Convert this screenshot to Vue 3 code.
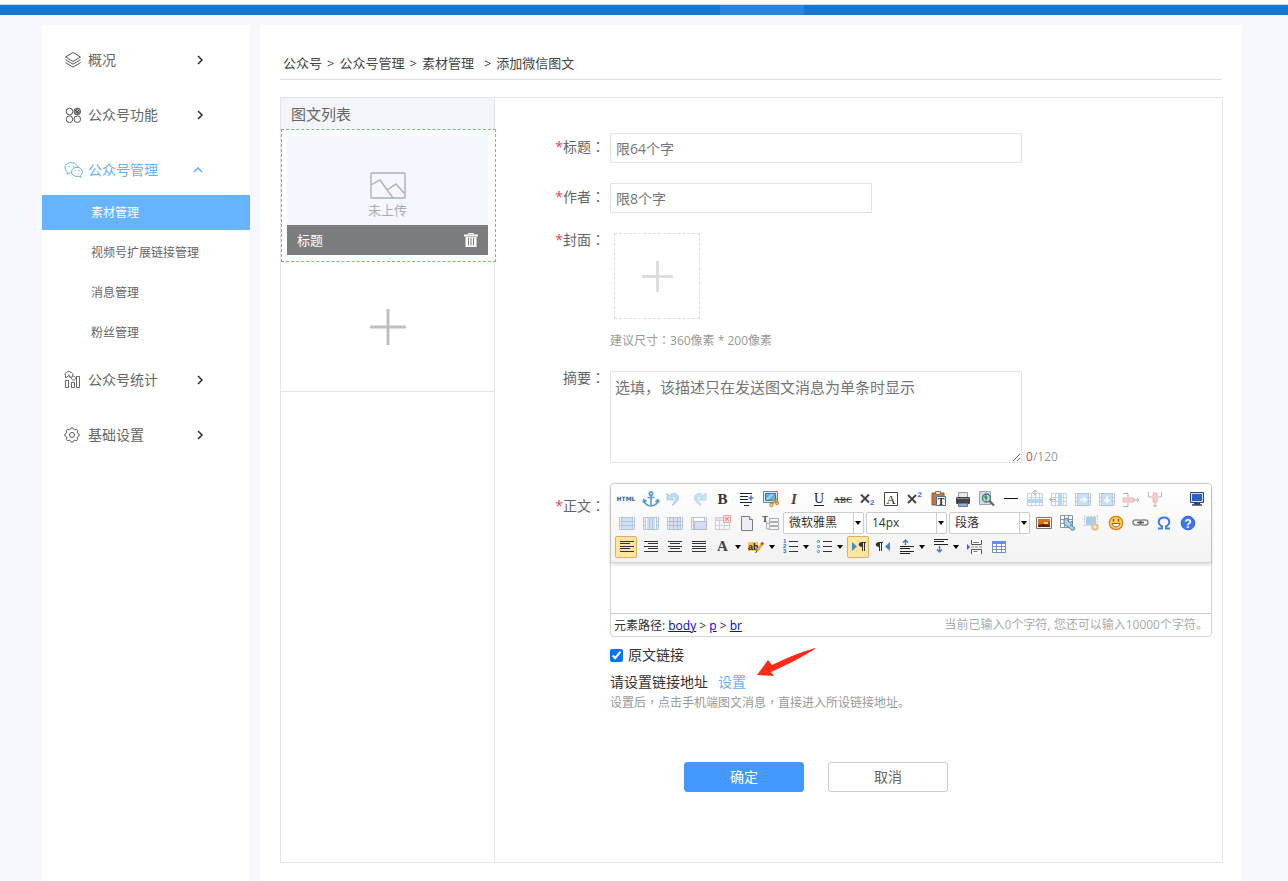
<script setup>
import { ref, computed } from 'vue'

const menuTop = [
  { label: '概况', icon: 'layers' },
  { label: '公众号功能', icon: 'circles' },
  { label: '公众号管理', icon: 'wechat', open: true, children: ['素材管理', '视频号扩展链接管理', '消息管理', '粉丝管理'] },
  { label: '公众号统计', icon: 'stats' },
  { label: '基础设置', icon: 'gear' },
]

// Eight-toothed cog outline around (8, 9)
const cog = Array.from({ length: 32 }, (_, i) => {
  const r = i % 4 < 2 ? 7.3 : 5.9
  const a = ((i - 0.5) / 32) * Math.PI * 2
  return `${(8 + r * Math.cos(a)).toFixed(2)} ${(9 + r * Math.sin(a)).toFixed(2)}`
}).join('L')

const menuIcons = {
  layers: '<path d="M9 1.500 16.500 6 9 10.500 1.500 6z"/><path d="M1.500 8.700 9 13.200l7.500-4.500M1.500 11.600 9 16.100l7.500-4.500"/>',
  circles: '<circle cx="5.500" cy="5.500" r="3.300"/><circle cx="13.300" cy="5.500" r="3.300" fill="#aaa"/><circle cx="5.500" cy="13.200" r="3.300"/><circle cx="13.300" cy="13.200" r="3.300"/><path d="M10.800 5.500l2.500-2.500M11.500 7.500l4-4M13 8.300l3-3M11 4l4 4"/>',
  wechat: '<path d="M7.800 12.200c-.9 0-1.800-.1-2.500-.4L2.800 13.300l.6-2.500C1.900 9.800 1 8.400 1 6.900 1 3.900 3.900 1.500 7.400 1.500c3.200 0 5.900 2 6.300 4.600"/><path d="M13 6.300c3.100 0 5.500 2 5.500 4.600 0 1.400-.7 2.600-1.900 3.500l.5 2-2.200-1.200c-.6.200-1.200.3-1.900.3-3.100 0-5.500-2-5.500-4.600s2.400-4.600 5.500-4.600z"/><path d="M5 5.200v1M9.500 5.200v1M11 9.200v1M15 9.200v1" stroke-width="1.400"/>',
  stats: '<g stroke-width=".9"><path d="M1.500 9.500h3v7h-3zM7.500 11.500h3v5h-3zM12.500 5.500h3v11h-3z"/><path d="M1.500 7V4.500a2 2 0 0 1 1-3 3 3 0 0 1 4.500 0 2 2 0 0 1 1.500 3M2 6.500l2.500-1.500 2 1.500 2.500-1M4.500 3.500l3 4a2.200 2.200 0 0 0 3 1.500 2 2 0 0 0 0-3.500l-2-1"/></g>',
  gear: `<circle cx="8" cy="9" r="2.500"/><path stroke-linejoin="round" d="M${cog}z"/>`,
}

const grid = (c) => `<path d="M3 4.500h16M3 8.500h16M3 12.500h16M3 16.500h16M3.500 4v13M7.500 4v13M11.500 4v13M15.500 4v13M18.500 4v13" stroke="${c}" fill="none"/>`
const film = (fill, inner = '') => `<path d="M3.500 4.500h15v12h-15z" fill="#fff" stroke="#7d9cc4"/><path d="M6 5h10v11H6z" fill="${fill}"/><path d="M5.500 5v11M16.500 5v11M3.500 8.500h2M3.500 12.500h2M16.500 8.500h2M16.500 12.500h2" stroke="#7d9cc4"/>${inner}`
const lines = (rows) => rows.map(([y, a, b]) => `<path d="M${a} ${y}.500H${b}" stroke="#333"/>`).join('')

const icons = {
  html: '<text x="10" y="12" text-anchor="middle" font-family="DejaVu Sans,sans-serif" font-size="6" font-weight="700" fill="#33659c">HTML</text>',
  anchor: '<g fill="none" stroke="#5a9bd5" stroke-width="1.700"><circle cx="11" cy="4.500" r="1.700"/><path d="M11 6v11M7.500 8.500h7"/><path d="M4 11c.3 3.500 3 5.500 7 6 4-.5 6.700-2.500 7-6M2.800 13.300 4 10.700l2.500 1.800M15.500 12.500l2.500-1.800 1.200 2.600"/></g>',
  undo: '<path d="M3 4v7h7L7.700 8.600C11 6.500 13 9 10 13l-2 3.500C14 13 16 9 13.500 6 11 3.500 7.500 4 5.500 6.400z" fill="#8fc0e8" stroke="#5fa0d8" stroke-width=".8"/>',
  redo: '<path d="M18 4v7h-7l2.300-2.400C10 6.500 8 9 11 13l2 3.500C7 13 5 9 7.500 6 10 3.500 13.500 4 15.500 6.400z" fill="#9ccaee" stroke="#74b0e0" stroke-width=".8"/>',
  bold: '<text x="10.500" y="15" text-anchor="middle" font-family="Liberation Serif,serif" font-size="15" font-weight="700" fill="#333">B</text>',
  indent: '<path d="M4 4.500h12M4 7.500h8M4 10.500h8M4 13.500h12M8 16.500h5" stroke="#222" stroke-width="1.200"/><path d="M12.500 9h5M15 6.500v5" stroke="#4c7de0" stroke-width="1.600"/>',
  snap: '<path d="M3.500 2.500h14v11h-14z" fill="#daeefa" stroke="#4c8db8"/><path d="M5.500 4.500h10v7h-10z" fill="#5eb0dd" stroke="#347ba8"/><path d="M6 10l5-5h3l-6 6z" fill="#9bd6ef"/><g fill="none" stroke="#c9942f" stroke-width="1.300"><path d="M11 10l6 4M17.500 9l-5 6"/><circle cx="11.500" cy="16" r="1.500"/><circle cx="17" cy="14" r="1.500"/></g>',
  italic: '<text x="10" y="15" text-anchor="middle" font-family="Liberation Serif,serif" font-size="15" font-style="italic" font-weight="700" fill="#444">I</text>',
  underline: '<text x="11" y="14" text-anchor="middle" font-family="Liberation Serif,serif" font-size="14" fill="#222">U</text><path d="M6 16.500h10" stroke="#222"/>',
  strike: '<text x="11" y="14" text-anchor="middle" font-family="Liberation Serif,serif" font-size="9" font-weight="700" fill="#555">ABC</text><path d="M2.500 10.500h17" stroke="#333"/>',
  sub: '<path d="M5 5.500l8 8M13 5.500l-8 8" stroke="#444" stroke-width="1.900"/><text x="14" y="16" font-family="Liberation Sans,sans-serif" font-size="8" font-weight="700" fill="#3c71d0">2</text>',
  box: '<path d="M4.500 3.500h13v13h-13z" fill="#fff" stroke="#444"/><text x="11" y="14.500" text-anchor="middle" font-family="Liberation Serif,serif" font-size="13" fill="#222">A</text>',
  sup: '<path d="M4 6l8 8M12 6l-8 8" stroke="#444" stroke-width="1.900"/><text x="13.500" y="8" font-family="Liberation Sans,sans-serif" font-size="8" font-weight="700" fill="#3c71d0">2</text>',
  paste: '<path d="M4 4h12v12H4z" fill="#c77736" stroke="#9c5627"/><path d="M7.500 2.500h5v3h-5z" fill="#ddd" stroke="#777"/><path d="M8.500 7.500h9v9h-9z" fill="#fff" stroke="#4472a8"/><text x="13" y="15.500" text-anchor="middle" font-family="Liberation Serif,serif" font-size="10" font-weight="700" fill="#222">T</text>',
  print: '<path d="M6.500 3.500h9v6h-9z" fill="#e9ebee" stroke="#999"/><rect x="4" y="8" width="14" height="7" rx="1" fill="#444"/><path d="M4.500 9.500h13" stroke="#888"/><path d="M6.500 14.500h9v3h-9z" fill="#cfe0fb" stroke="#777"/><path d="M7 16h8" stroke="#3c80e0"/>',
  preview: '<path d="M3.500 2.500h11v13h-11z" fill="#d4dbe3" stroke="#9aa5b1"/><circle cx="10.500" cy="9" r="4" fill="#b5dcf0" stroke="#536a7d" stroke-width="1.300"/><path d="M8 8c1-2.500 3-2.500 3.500 0l-1 4z" fill="#3b9659"/><path d="M13.500 12l4.500 4.500" stroke="#666" stroke-width="2.300"/>',
  hr: '<path d="M4 9.500h14" stroke="#111"/>',
  insertrow: grid('#9eb4d0') + '<path d="M3 10h16v4H3z" fill="#7ab6f0"/><path d="M11 1v6M8.500 3.500 11 1l2.500 2.500" fill="none" stroke="#777"/>',
  insertcol: grid('#9eb4d0') + '<path d="M10 4h4v13h-4z" fill="#7ab6f0"/><path d="M1 10.500h7M4 8 1.500 10.500 4 13" fill="none" stroke="#777"/>',
  mergeright: film('#9cc8f2', '<path d="M8 10.500h6M11.500 8l3 2.500-3 2.500" fill="none" stroke="#fff" stroke-width="1.500"/>'),
  mergedown: film('#9cc8f2', '<path d="M11 7v6M8.500 10.500l2.500 3 2.500-3" fill="none" stroke="#fff" stroke-width="1.500"/>'),
  splitrow: '<path d="M3 4.500h5v4M3 17.500h5v-4" fill="none" stroke="#777"/><path d="M3 9h11v4H3z" fill="#f3a8a8" stroke="#dd8585"/><path d="M14 11h5M17 9l2 2-2 2" fill="none" stroke="#777"/>',
  splitcol: '<path d="M4.500 3v5h4M17.500 3v5h-4" fill="none" stroke="#777"/><path d="M9 4h4v9H9z" fill="#f3a8a8" stroke="#dd8585"/><path d="M11 13v5M9 16l2 2 2-2" fill="none" stroke="#777"/>',
  screen: '<path d="M4.500 3.500h13v10h-13z" fill="#dbe5f5" stroke="#2e4775"/><path d="M6 5h10v7H6z" fill="#2f5fc8"/><path d="M8 14.500h6M6 16h10" stroke="#2e4775" stroke-width="1.300"/>',
  tabrows: film('#a9cdf0', '<path d="M6 8.500h10M6 12.500h10" stroke="#7d9cc4"/>'),
  tabcols: film('#fff', '<path d="M7 5h2v11H7zM10 5h2v11h-2zM13 5h2v11h-2z" fill="#a9cdf0"/><path d="M9.500 5v11M12.500 5v11" stroke="#7d9cc4"/>'),
  tabcells: film('#c3cdee', '<path d="M6 8.500h10M6 12.500h10M9.500 5v11M13.500 5v11" stroke="#7d88b8"/>'),
  tabmerge: film('#fff', '<path d="M6.500 8.500h12v8h-12z" fill="#b9c5ee" stroke="#7d88b8"/>'),
  deltable: '<path d="M3 4h15v3H3z" fill="#eec9b8"/><path d="M3.500 4.500h14v12h-14zM3.500 7.500h14M3.500 12.500h14M7.500 7v9M12.500 7v9" fill="none" stroke="#a8aec0"/><path d="M11.500 2.500h7v7h-7z" fill="#fbe0df" stroke="#e16060"/><path d="M13 4l4 4M17 4l-4 4" stroke="#e13333" stroke-width="1.300"/>',
  doc: '<path d="M5.500 3.500h8l3 3v11h-11z" fill="#eceef4" stroke="#777d87"/><path d="M13.500 3.500v3h3" fill="#fff" stroke="#777d87"/>',
  template: '<text x="2" y="9" font-family="Liberation Serif,serif" font-size="9" font-weight="700" fill="#444">T</text><path d="M6.500 9v7h3M6.500 10.500h3M9.500 5.500h9v3h-9zM9.500 9.500h9v3h-9zM9.500 13.500h9v3h-9z" fill="none" stroke="#a3aebb"/>',
  image: '<path d="M3.500 4.500h15v11h-15z" fill="#fff" stroke="#777"/><path d="M5 6h12v8H5z" fill="#b64b12"/><path d="M5 6h12v2l-8 4H5z" fill="#db7020"/><path d="M11 9h4v2h-4z" fill="#ffdc62"/><path d="M5 12l5-1 7 1v2H5z" fill="#5f2010"/>',
  tabtool: '<path d="M3.500 2.500h12v12h-12z" fill="#fff"/><path d="M3.500 2.500h12v12h-12zM3.500 6.500h12M3.500 10.500h12M7.500 2.500v12M11.500 2.500v12" fill="none" stroke="#8a96a8"/><path d="M7 9a3 3 0 0 1 4-3.500V8l2 1.500L15 8c1.500 3-1 5-2 4l5 3-1 2-2 0-5-4c-2 0-3-1.500-3-4z" fill="#a9d4ed" stroke="#54819e"/>',
  imgtool: '<path d="M5 4h10v8H5z" fill="#6fa8e0"/><path d="M3.500 2v12M16.500 2v9M3 3.500h14M3 12.500h8" stroke="#a5b6c8" stroke-dasharray="2 1"/><circle cx="14" cy="14" r="2.700" fill="#f9e8be" stroke="#cf9a40" stroke-width="2.200"/>',
  smile: '<circle cx="11" cy="10" r="6.700" fill="#ffd455" stroke="#df7a20" stroke-width="1.300"/><path d="M8.500 6v2.500M13.500 6v2.500" stroke="#9d4e11" stroke-width="1.500"/><path d="M7 10.500h8c-.5 4.500-7.500 4.500-8 0z" fill="#fff" stroke="#b35b16"/>',
  link: '<g fill="none" stroke="#888" stroke-width="1.400"><rect x="4" y="7" width="8" height="5" rx="2.500"/><rect x="11" y="7" width="8" height="5" rx="2.500"/><path d="M8 9.500h7" stroke="#555"/></g>',
  omega: '<path d="M5 15.500h4v-2C3.500 10.500 5.500 4.500 11 4.500s7.500 6 2 9v2h4" fill="none" stroke="#3e7be2" stroke-width="2"/>',
  help: '<circle cx="11" cy="10" r="6.800" fill="#3c78ea" stroke="#2b5fc9"/><text x="11" y="14.500" text-anchor="middle" font-family="Liberation Sans,sans-serif" font-size="12" font-weight="700" fill="#fff">?</text>',
  left: lines([[4, 4, 18], [6, 4, 14], [9, 4, 18], [11, 4, 14], [14, 4, 18]]),
  right: lines([[4, 4, 18], [6, 8, 18], [9, 4, 18], [11, 8, 18], [14, 4, 18]]),
  center: lines([[4, 4, 18], [6, 6, 16], [9, 4, 18], [11, 6, 16], [14, 4, 18]]),
  justify: lines([[4, 4, 18], [6, 4, 18], [9, 4, 18], [11, 4, 18], [14, 4, 18]]),
  color: '<text x="10.500" y="14" text-anchor="middle" font-family="Liberation Serif,serif" font-size="15" font-weight="700" fill="#444">A</text>',
  mark: '<path d="M2 5h10v9H2z" fill="#ffc161"/><text x="2" y="12.500" font-family="Liberation Sans,sans-serif" font-size="9" font-weight="700" fill="#222">ab</text><path d="M11 14l5-7" stroke="#e9a43c" stroke-width="2.500"/><path d="M15.500 7.500l1.500-2" stroke="#d33" stroke-width="2.500"/><path d="M9.500 16l1.500-2.500" stroke="#333"/>',
  ordered: '<g font-family="Liberation Sans,sans-serif" font-size="6" font-weight="700" fill="#2e68df"><text x="3" y="6">1</text><text x="3" y="11">2</text><text x="3" y="16">3</text></g><path d="M9 4.500h9M9 9.500h9M9 14.500h9" stroke="#333"/>',
  bullets: '<g fill="none" stroke="#4877d8"><circle cx="4.500" cy="4.500" r="1.100"/><circle cx="4.500" cy="9.500" r="1.100"/><circle cx="4.500" cy="14.500" r="1.100"/></g><path d="M9 4.500h9M9 9.500h9M9 14.500h9" stroke="#333"/>',
  ltr: '<path d="M4 5v9l5-4.500z" fill="#4583dc"/><path d="M13 5.500h5M14.500 5v9M16.500 5v9" stroke="#333"/><path d="M14.500 5c-5 0-5 5 0 5z" fill="#333"/>',
  rtl: '<path d="M18 5v9l-5-4.500z" fill="#4583dc"/><path d="M6 5.500h5M7.500 5v9M9.500 5v9" stroke="#333"/><path d="M7.500 5c-5 0-5 5 0 5z" fill="#333"/>',
  spacetop: '<path d="M9.500 8V3M7 5.500 9.500 3 12 5.500" fill="none" stroke="#4779cb" stroke-width="1.400"/><path d="M4 9.500h14M4 11.500h10M4 14.500h14M4 16.500h10" stroke="#222"/>',
  spacebottom: '<path d="M4 2.500h14M4 4.500h10M4 7.500h14" stroke="#222"/><path d="M9.500 9v6M7 12.500 9.500 15 12 12.500" fill="none" stroke="#4779cb" stroke-width="1.400"/>',
  pagebreak: '<path d="M7.500 3v4.500h10V3M7.500 17v-4.500h10V17" fill="#fff" stroke="#555"/><path d="M7 10h12" stroke="#888" stroke-dasharray="3 1"/><path d="M3 7v6l3-3z" fill="#3160bd"/><path d="M9 5.500h6M9.500 14.500h4" stroke="#777"/>',
  table: '<path d="M4.500 4.500h13v11h-13z" fill="#fff"/><path d="M4.500 4.500h13v11h-13zM4.500 9.500h13M4.500 12.500h13M8.500 7v9M13.500 7v9" fill="none" stroke="#7191c4"/><path d="M4 4h14v3H4z" fill="#5d92e8"/>',
}

const b = (icon, title, o = {}) => ({ icon, title, ...o })
const off = { disabled: true }
const row1 = [
  b('html', '源代码'), b('anchor', '锚点'), b('undo', '撤销', off), b('redo', '重做', off), b('bold', '加粗'),
  b('indent', '首行缩进'), b('snap', '截图'), b('italic', '斜体'), b('underline', '下划线'), b('strike', '删除线'),
  b('sub', '下标'), b('box', '字符边框'), b('sup', '上标'), b('paste', '纯文本粘贴'), b('print', '打印'),
  b('preview', '预览'), b('hr', '分隔线'), b('insertrow', '前插入行', off), b('insertcol', '前插入列', off),
  b('mergeright', '右合并单元格', off), b('mergedown', '下合并单元格', off), b('splitrow', '拆分成行', off), b('splitcol', '拆分成列', off),
]
const row2a = [
  b('tabrows', '拆分行', off), b('tabcols', '拆分列', off), b('tabcells', '完全拆分单元格', off), b('tabmerge', '合并多个单元格', off),
  b('deltable', '删除表格', off), b('doc', '清空文档'), b('template', '插入标题'),
]
const selects = [
  { label: '字体', options: ['微软雅黑', '宋体', '黑体'] },
  { label: '字号', options: ['14px', '16px', '18px'] },
  { label: '段落格式', options: ['段落', '标题 1', '标题 2'] },
]
const row2b = [
  b('image', '图片'), b('tabtool', '表格属性'), b('imgtool', '图片属性', off), b('smile', '表情'),
  b('link', '超链接'), b('omega', '特殊字符'), b('help', '帮助'),
]
const row3 = [
  b('left', '居左对齐', { active: true }), b('right', '居右对齐'), b('center', '居中对齐'), b('justify', '两端对齐'),
  b('color', '字体颜色', { menu: true }), b('mark', '背景色', { menu: true }), b('ordered', '有序列表', { menu: true }),
  b('bullets', '无序列表', { menu: true }), b('ltr', '从左向右输入', { active: true }), b('rtl', '从右向左输入'),
  b('spacetop', '段前距', { menu: true }), b('spacebottom', '段后距', { menu: true }), b('pagebreak', '分页'), b('table', '插入表格'),
]

const title = ref('')
const author = ref('')
const summary = ref('')
const body = ref('')
const linked = ref(true)
const used = computed(() => summary.value.length)
</script>

<template>
  <div class="page">
    <header class="topbar"><span class="topbar-active"></span></header>
    <div class="columns">
      <nav class="sidebar">
        <template v-for="item in menuTop" :key="item.label">
          <button type="button" class="menu-item" :class="{ open: item.open }">
            <svg class="menu-icon" viewBox="0 0 19 19" v-html="menuIcons[item.icon]"></svg>
            <span class="menu-label">{{ item.label }}</span>
            <svg class="chevron" viewBox="0 0 10 10"><path :d="item.open ? 'M1 7l4-4 4 4' : 'M3 1l4 4-4 4'" /></svg>
          </button>
          <div v-if="item.children" class="submenu">
            <a v-for="(c, i) in item.children" :key="c" href="#" :class="{ current: i === 0 }">{{ c }}</a>
          </div>
        </template>
      </nav>

      <main class="main">
        <div class="crumbs">
          <a href="#">公众号</a><i>&gt;</i><a href="#">公众号管理</a><i>&gt;</i><a href="#">素材管理</a><i class="last">&gt;</i><span>添加微信图文</span>
        </div>

        <div class="panel">
          <aside class="list">
            <h2>图文列表</h2>
            <div class="card">
              <div class="thumb">
                <svg viewBox="0 0 36 27"><rect x="1" y="1" width="34" height="25" rx="1" /><path d="M1 13l9-5 13 18M17 18l9-6 9 10" /></svg>
                <span>未上传</span>
              </div>
              <div class="card-bar">
                <span>标题</span>
                <button type="button" aria-label="删除">
                  <svg viewBox="0 0 14 14"><path d="M4.500 1.500V.5h5v1" stroke="#fff" fill="none" /><path d="M0 1.500h14v2H0zM1.500 4h11v10h-11z" fill="#fff" /><path d="M4.500 4.500v8M7 4.500v8M9.500 4.500v8" stroke="#7b7c7d" /></svg>
                </button>
              </div>
            </div>
            <button type="button" class="add" aria-label="添加图文">
              <svg viewBox="0 0 36 36"><path d="M18 0v36M0 18h36" /></svg>
            </button>
          </aside>

          <form class="form" @submit.prevent>
            <div class="row">
              <label class="lab" for="title"><b>*</b>标题<i class="punct">：</i></label>
              <input id="title" v-model="title" class="text wide" type="text" placeholder="限64个字">
            </div>
            <div class="row">
              <label class="lab" for="author"><b>*</b>作者<i class="punct">：</i></label>
              <input id="author" v-model="author" class="text" type="text" placeholder="限8个字">
            </div>
            <div class="row cover">
              <span class="lab tight"><b>*</b>封面<i class="punct">：</i></span>
              <div>
                <button type="button" class="upload" aria-label="上传封面">
                  <svg viewBox="0 0 31 31"><path d="M15.500 0v31M0 15.500h31" /></svg>
                </button>
                <p class="hint">建议尺寸<i class="punct">：</i>360像素 * 200像素</p>
              </div>
            </div>
            <div class="row">
              <label class="lab tight" for="summary">摘要<i class="punct">：</i></label>
              <textarea id="summary" v-model="summary" class="summary" placeholder="选填，该描述只在发送图文消息为单条时显示"></textarea>
              <span class="count"><b>{{ used }}</b>/120</span>
            </div>
            <div class="row">
              <label class="lab bodylab" for="body"><b>*</b>正文<i class="punct">：</i></label>
              <div class="content">
                <div class="editor">
                  <div class="toolbar">
                    <div class="tools">
                      <button v-for="t in row1" :key="t.icon" type="button" class="tool" :class="{ off: t.disabled }" :disabled="t.disabled" :aria-label="t.title">
                        <svg viewBox="0 0 20 20" v-html="icons[t.icon]"></svg>
                      </button>
                      <button type="button" class="tool full" aria-label="全屏"><svg viewBox="0 0 20 20" v-html="icons.screen"></svg></button>
                    </div>
                    <div class="tools">
                      <button v-for="t in row2a" :key="t.icon" type="button" class="tool" :class="{ off: t.disabled }" :disabled="t.disabled" :aria-label="t.title">
                        <svg viewBox="0 0 20 20" v-html="icons[t.icon]"></svg>
                      </button>
                      <span v-for="s in selects" :key="s.label" class="combo">
                        <select :aria-label="s.label"><option v-for="o in s.options" :key="o">{{ o }}</option></select>
                        <i class="caret"></i>
                      </span>
                      <button v-for="t in row2b" :key="t.icon" type="button" class="tool" :class="{ off: t.disabled }" :disabled="t.disabled" :aria-label="t.title">
                        <svg viewBox="0 0 20 20" v-html="icons[t.icon]"></svg>
                      </button>
                    </div>
                    <div class="tools">
                      <button v-for="t in row3" :key="t.icon" type="button" class="tool" :class="{ active: t.active, menu: t.menu }" :aria-label="t.title">
                        <svg viewBox="0 0 20 20" v-html="icons[t.icon]"></svg>
                        <i v-if="t.menu" class="caret"></i>
                      </button>
                    </div>
                  </div>
                  <textarea id="body" v-model="body" class="canvas"></textarea>
                  <div class="status">
                    <span class="path">元素路径: <a href="#">body</a> &gt; <a href="#">p</a> &gt; <a href="#">br</a></span>
                    <span class="words">当前已输入0个字符, 您还可以输入10000个字符。</span>
                  </div>
                </div>
                <label class="check"><input v-model="linked" type="checkbox">原文链接</label>
                <p class="url">
                  请设置链接地址<a href="#">设置</a>
                  <svg class="pointer" viewBox="0 0 60 32"><path d="M59 1c-14 4-31 11-43 17l-4-5L1 28l17 1-3-4C31 18 46 10 59 2z" /></svg>
                </p>
                <p class="hint note">设置后<i class="punct">，</i>点击手机端图文消息<i class="punct">，</i>直接进入所设链接地址。</p>
              </div>
            </div>
            <div class="actions">
              <button type="submit" class="ok">确定</button>
              <button type="button">取消</button>
            </div>
          </form>
        </div>
      </main>
    </div>
  </div>
</template>

<style>
body { background: #f6f8fd; }
</style>

<style scoped>
* { box-sizing: border-box; }
.page {
  min-height: 100vh;
  display: flex;
  flex-direction: column;
  font: 14px/20px "Open Sans", "Noto Sans CJK SC", sans-serif;
  color: #666;
}
button, input, textarea, select { font: inherit; color: inherit; margin: 0; padding: 0; }
button { background: none; border: 0; cursor: pointer; }
a { color: inherit; text-decoration: none; }
p, h2 { margin: 0; font-weight: 400; }
b, i { font-weight: 400; font-style: normal; }
svg { display: block; flex: none; }
.punct { font-family: "Noto Sans CJK TC", sans-serif; line-height: 1; }

.topbar { height: 15px; background: #1775d1; border-top: 4px solid #fff; box-shadow: inset 0 1px #d5dbe2; display: flex; padding: 1px 0 0 720px; }
.topbar-active { width: 84px; background: #2a84dd; }

.columns { flex: 1; display: flex; gap: 10px; padding: 10px 46px 0 42px; }
.sidebar { flex: 0 0 208px; background: #fff; padding-top: 10px; }
.menu-item { width: 100%; height: 50px; margin-bottom: 5px; padding: 0 45px 0 22px; display: flex; align-items: center; text-align: left; }
.menu-icon { width: 19px; height: 19px; margin-right: 5px; fill: none; stroke: #555; stroke-width: 1; }
.menu-label { flex: 1; }
.chevron { width: 10px; height: 10px; fill: none; stroke: #333; stroke-width: 1.6; }
.menu-item.open { margin-bottom: 0; padding-right: 47px; color: #66b1ff; }
.menu-item.open svg { stroke: #66b1ff; }
.submenu a { display: block; height: 35px; margin-bottom: 5px; padding-left: 49px; font-size: 12px; line-height: 35px; }
.submenu .current { background: #66b3ff; color: #fff; }

.main { flex: 1; min-width: 0; background: #fff; padding: 0 19px 18px 20px; }
.crumbs { height: 55px; margin-right: 1px; padding: 28px 3px 0; border-bottom: 1px solid #e0e0e0; font-size: 13px; color: #444; white-space: nowrap; }
.crumbs i { margin: 0 5px; }
.crumbs .last { margin-left: 10px; }

.panel { margin-top: 17px; border: 1px solid #e4e5e9; display: flex; }
.list { flex: 0 0 214px; min-width: 0; border-right: 1px solid #e4e5e9; }
.list h2 { height: 31px; padding-left: 10px; background: #f4f5fa; font-size: 15px; line-height: 32px; }
.card { width: 215px; height: 133px; border: 1px dashed #66b1ff; padding: 6px 7px 6px 5px; display: flex; flex-direction: column; background: #fff; position: relative; }
.thumb { flex: 1; display: flex; flex-direction: column; align-items: center; justify-content: flex-end; padding-bottom: 5px; background: #f4f8fe; color: #a9adb3; font-size: 13px; }
.thumb svg { width: 36px; height: 27px; margin-bottom: 1px; fill: none; stroke: #adb1b6; stroke-width: 1.4; }
.card-bar { height: 30px; padding: 0 10px; display: flex; align-items: center; justify-content: space-between; background: #7b7c7d; color: #fff; font-size: 13px; }
.card-bar svg { width: 14px; height: 14px; }
.add { width: 100%; height: 130px; border-bottom: 1px solid #e4e5e9; display: flex; align-items: center; justify-content: center; }
.add svg { width: 36px; height: 36px; stroke: #bfbfbf; stroke-width: 3; }

.form { flex: 1; min-width: 0; padding: 35px 10px 70px 0; }
.row { display: flex; align-items: flex-start; margin-bottom: 20px; }
.lab { flex: 0 0 110px; margin-right: 5px; padding-top: 4px; text-align: right; }
.lab b, .count b { color: #f03a4a; }
.lab.tight { padding-top: 0; margin-top: -3px; }
.lab.bodylab { padding-top: 13px; }
.text { width: 262px; height: 30px; padding: 0 5px; border: 1px solid #e4e5e9; background: #fff; }
.wide { width: 412px; }
.text::placeholder, .summary::placeholder { color: #757575; }
.upload { display: flex; width: 86px; height: 86px; margin-left: 4px; border: 1px dashed #dcdfe2; align-items: center; justify-content: center; }
.upload svg { width: 31px; height: 31px; stroke: #dbdfe3; stroke-width: 3; }
.hint { font-size: 12px; color: #999; }
.cover .hint { margin-top: 12px; }
.hint.note { margin-top: 1px; }
.summary { width: 412px; height: 92px; padding: 5px 4px; border: 1px solid #e4e5e9; font-size: 15px; }
.count { align-self: flex-end; margin: 0 0 -4px 4px; font-size: 12px; color: #999; }

.content { flex: 1; min-width: 0; font-size: 14px; }
.editor { border: 1px solid #d4d4d4; border-radius: 4px; background: #fff; font-size: 12px; }
.toolbar { padding: 3px; border-bottom: 1px solid #d4d4d4; border-radius: 4px 4px 0 0; background: linear-gradient(#fff, #f2f2f2); box-shadow: 0 1px 4px rgba(0, 0, 0, 0.2); position: relative; }
.tools { display: flex; height: 24px; align-items: center; }
.tool { width: 22px; height: 22px; margin: 0 1px; border: 1px solid transparent; border-radius: 2px; display: flex; align-items: center; flex: none; }
.tool svg { width: 20px; height: 20px; }
.tool.off svg { opacity: 0.55; }
.tool.menu { width: 32px; }
.tool.full { margin-left: auto; margin-right: 1px; }
.tool.active { border-color: #dcac6c; background: #ffe69f; }
.caret { border: 3px solid transparent; border-top: 4px solid #000; border-bottom: 0; }
.tool .caret { margin-left: 3px; }
.combo { display: flex; align-items: center; width: 81px; height: 22px; margin: 0 1px; border: 1px solid #ccc; border-radius: 2px; background: #fff; position: relative; flex: none; color: #333; }
.combo select { width: 100%; height: 20px; border: 0; padding: 0 5px; background: none; appearance: none; font-size: 12px; line-height: 20px; outline: 0; }
.combo .caret { position: absolute; right: 2px; top: 8px; }
.combo::after { content: ""; position: absolute; right: 9px; top: 0; bottom: 0; border-left: 1px solid #ccc; }
.canvas { display: block; width: 100%; height: 50px; padding: 8px; border: 0; resize: none; outline: 0; background: none; }
.status { display: flex; justify-content: space-between; height: 23px; padding: 0 3px; border-top: 1px solid #ccc; line-height: 22px; color: #333; }
.path { line-height: 24px; }
.status a { color: #00e; text-decoration: underline; }
.words { color: #aaa; }
.check { display: flex; align-items: center; height: 20px; margin-top: 8px; color: #333; }
.check input { width: 13px; height: 13px; margin-right: 5px; accent-color: #0075ff; }
.url { position: relative; width: max-content; margin-top: 7px; color: #333; }
.url a { margin-left: 10px; color: #66b1ff; }
.pointer { position: absolute; left: 146px; top: -25px; width: 60px; height: 32px; fill: #ff2a17; }
.actions { display: flex; gap: 24px; margin: 49px 0 0 189px; }
.actions button { width: 120px; height: 30px; border: 1px solid #ccc; border-radius: 3px; background: #fff; }
.actions .ok { border-color: #4499ff; background: #4499ff; color: #fff; }
</style>
